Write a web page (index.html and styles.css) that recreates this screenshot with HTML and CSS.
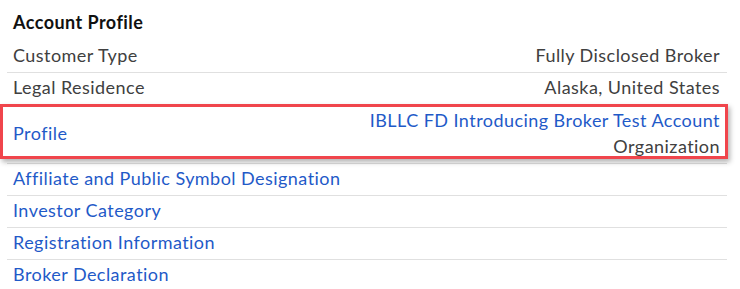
FILE: index.html
```html
<!DOCTYPE html>
<html>
<head>
<meta charset="utf-8">
<link rel="stylesheet" href="styles.css">
</head>
<body>
<section class="panel">
  <h2 class="title">Account Profile</h2>
  <div class="rows">
    <div class="row"><span class="label">Customer Type</span><span class="value">Fully Disclosed Broker</span></div>
    <div class="row"><span class="label">Legal Residence</span><span class="value">Alaska, United States</span></div>
    <div class="row row-highlight"><a class="link">Profile</a><span class="value"><a class="link">IBLLC FD Introducing Broker Test Account</a><br>Organization</span></div>
    <div class="row"><a class="link">Affiliate and Public Symbol Designation</a></div>
    <div class="row"><a class="link">Investor Category</a></div>
    <div class="row"><a class="link">Registration Information</a></div>
    <div class="row"><a class="link">Broker Declaration</a></div>
  </div>
</section>
</body>
</html>
```
FILE: styles.css
```css
html, body {
  margin: 0;
  padding: 0;
  background: #fff;
}
body {
  font-family: Lato, "Open Sans", sans-serif;
  font-size: 18px;
  letter-spacing: 0.45px;
  color: #404040;
}
.panel {
  width: 720px;
  padding: 8px 0 0 7px;
}
.title {
  margin: 0;
  padding: 1px 6px 0;
  font-size: 18px;
  font-weight: 700;
  color: #111;
  line-height: 26px;
  height: 32px;
}
.row {
  display: flex;
  justify-content: space-between;
  align-items: center;
  padding: 2px 7px 4px 6px;
  line-height: 25px;
  border-bottom: 1px solid #e0e0e0;
}
.rows .row:last-child {
  border-bottom: none;
}
.value {
  text-align: right;
}
.link {
  color: #1f5ac8;
  text-decoration: none;
}
.row-highlight {
  position: relative;
  line-height: 26px;
}
.row-highlight::after {
  content: "";
  position: absolute;
  left: -7px;
  right: -1px;
  top: -1px;
  bottom: 4px;
  border: 3px solid #f0454c;
  box-shadow: 2px 3px 5px rgba(0, 0, 0, 0.3);
  pointer-events: none;
}
```
